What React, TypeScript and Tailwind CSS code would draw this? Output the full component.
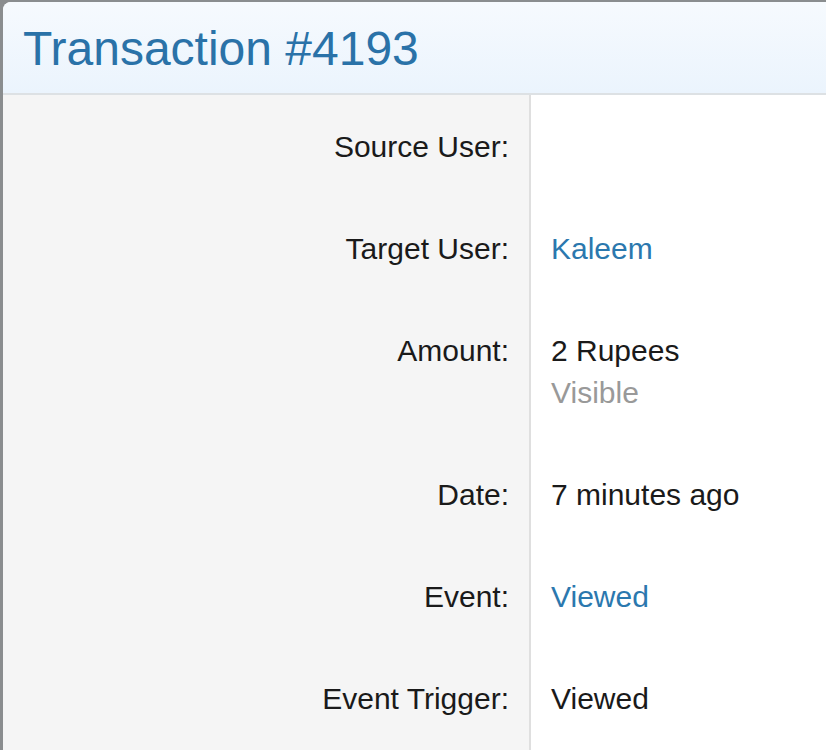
import React from "react";

interface Row {
  label: string;
  value?: string;
  link?: boolean;
  sub?: string;
}

const rows: Row[] = [
  { label: "Source User:" },
  { label: "Target User:", value: "Kaleem", link: true },
  { label: "Amount:", value: "2 Rupees", sub: "Visible" },
  { label: "Date:", value: "7 minutes ago" },
  { label: "Event:", value: "Viewed", link: true },
  { label: "Event Trigger:", value: "Viewed" },
];

const DetailRow: React.FC<{ row: Row; first: boolean }> = ({ row, first }) => (
  <div className="flex">
    <div
      className={`w-[528px] shrink-0 bg-[#f5f5f5] border-r-2 border-[#dfdfdf] pb-[30px] pr-[20px] text-right text-[#1a1a1a] ${first ? "pt-[31px]" : "pt-[30px]"}`}
    >
      {row.label}
    </div>
    <div className={`flex-1 bg-white pb-[30px] pl-[20px] ${first ? "pt-[31px]" : "pt-[30px]"}`}>
      {row.value && (
        <div className={row.link ? "text-[#2b78ae]" : "text-[#1a1a1a]"}>{row.value}</div>
      )}
      {row.sub && <div className="text-[#999999]">{row.sub}</div>}
    </div>
  </div>
);

export default function App() {
  return (
    <div
      className="w-[826px] h-[750px] overflow-hidden bg-[#8a8d8f] pt-[2px] pl-[3px]"
      style={{ fontFamily: '"Liberation Sans", Arial, sans-serif' }}
    >
      <div className="h-full rounded-tl-[8px] overflow-hidden bg-white">
        <div className="h-[93px] flex items-center pl-[20px] pt-[2px] border-b-2 border-[#dde1e4] bg-gradient-to-b from-[#f6fafe] to-[#ebf4fd]">
          <h1 className="text-[48px] leading-none text-[#2a72a8]">Transaction #4193</h1>
        </div>
        <div className="text-[30px] leading-[42px]">
          {rows.map((r, i) => (
            <DetailRow key={r.label} row={r} first={i === 0} />
          ))}
        </div>
      </div>
    </div>
  );
}
